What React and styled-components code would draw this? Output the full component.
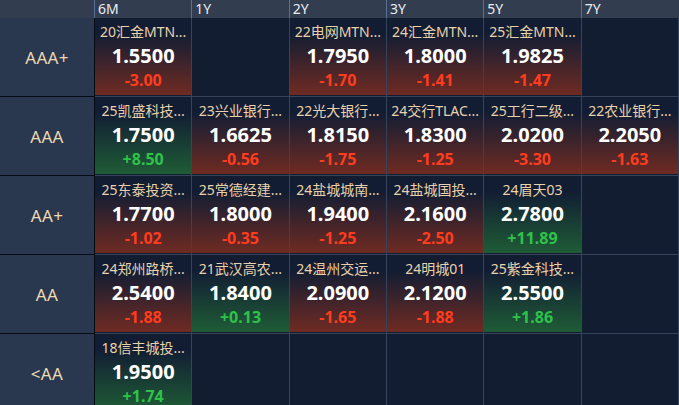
import React from "react";
import styled, { createGlobalStyle } from "styled-components";

const GlobalStyle = createGlobalStyle`
  html, body {
    margin: 0;
    padding: 0;
    background: #121d32;
    font-family: "Noto Sans", "Noto Sans CJK SC", sans-serif;
  }
`;

const tenors = ["6M", "1Y", "2Y", "3Y", "5Y", "7Y"];

const rows = [
  {
    grade: "AAA+",
    cells: [
      ["20汇金MTN...", "1.5500", "-3.00"],
      null,
      ["22电网MTN...", "1.7950", "-1.70"],
      ["24汇金MTN...", "1.8000", "-1.41"],
      ["25汇金MTN...", "1.9825", "-1.47"],
      null,
    ],
  },
  {
    grade: "AAA",
    cells: [
      ["25凯盛科技...", "1.7500", "+8.50"],
      ["23兴业银行...", "1.6625", "-0.56"],
      ["22光大银行...", "1.8150", "-1.75"],
      ["24交行TLAC...", "1.8300", "-1.25"],
      ["25工行二级...", "2.0200", "-3.30"],
      ["22农业银行...", "2.2050", "-1.63"],
    ],
  },
  {
    grade: "AA+",
    cells: [
      ["25东泰投资...", "1.7700", "-1.02"],
      ["25常德经建...", "1.8000", "-0.35"],
      ["24盐城城南...", "1.9400", "-1.25"],
      ["24盐城国投...", "2.1600", "-2.50"],
      ["24眉天03", "2.7800", "+11.89"],
      null,
    ],
  },
  {
    grade: "AA",
    cells: [
      ["24郑州路桥...", "2.5400", "-1.88"],
      ["21武汉高农...", "1.8400", "+0.13"],
      ["24温州交运...", "2.0900", "-1.65"],
      ["24明城01", "2.1200", "-1.88"],
      ["25紫金科技...", "2.5500", "+1.86"],
      null,
    ],
  },
  {
    grade: "<AA",
    cells: [["18信丰城投...", "1.9500", "+1.74"], null, null, null, null, null],
  },
];

const Board = styled.div`
  display: grid;
  grid-template-columns: 95px repeat(6, 1fr);
  grid-template-rows: 18px repeat(5, 79px);
  width: 679px;
  height: 405px;
  overflow: hidden;
  background: #121d32;
`;

const Corner = styled.div`
  background: #323d50;
`;

const HeadCell = styled.div`
  margin-left: -1px;
  padding-left: 3px;
  background: #323d50;
  border-left: 1px solid #5b6f98;
  color: #e8ecf3;
  font-size: 14px;
  line-height: 18px;
`;

const Grade = styled.div`
  display: flex;
  align-items: center;
  justify-content: center;
  background: #29384f;
  border-right: 1px solid #060a12;
  border-bottom: 1px solid #060a12;
  color: #efd9b3;
  font-size: 17px;
  letter-spacing: 0.3px;
`;

const tints = {
  up: "#1f5d36",
  down: "#712b22",
};

const Cell = styled.div`
  display: flex;
  flex-direction: column;
  align-items: center;
  gap: 2px;
  padding-top: 4px;
  padding-bottom: 1px;
  border-right: 1px solid #35435b;
  border-bottom: 1px solid #35435b;
  background: ${(p) =>
    p.$trend
      ? `linear-gradient(to bottom, #121d33 20%, ${tints[p.$trend]} 100%)`
      : "#121d32"};
  background-clip: content-box;
  overflow: hidden;
`;

const Name = styled.div`
  color: #e9d2ab;
  font-size: 14px;
  line-height: 20px;
  white-space: nowrap;
`;

const Price = styled.div`
  color: #ffffff;
  font-size: 20px;
  font-weight: 700;
  line-height: 23px;
`;

const Change = styled.div`
  color: ${(p) => (p.$trend === "up" ? "#2fc24b" : "#ff3c1e")};
  font-size: 16px;
  font-weight: 700;
  line-height: 22px;
`;

function Quote({ data }) {
  if (!data) return <Cell />;
  const [name, price, change] = data;
  const trend = change.startsWith("+") ? "up" : "down";
  return (
    <Cell $trend={trend}>
      <Name>{name}</Name>
      <Price>{price}</Price>
      <Change $trend={trend}>{change}</Change>
    </Cell>
  );
}

export default function App() {
  return (
    <>
      <GlobalStyle />
      <Board>
        <Corner />
        {tenors.map((t) => (
          <HeadCell key={t}>{t}</HeadCell>
        ))}
        {rows.map((row) => (
          <React.Fragment key={row.grade}>
            <Grade>{row.grade}</Grade>
            {row.cells.map((c, i) => (
              <Quote key={i} data={c} />
            ))}
          </React.Fragment>
        ))}
      </Board>
    </>
  );
}
